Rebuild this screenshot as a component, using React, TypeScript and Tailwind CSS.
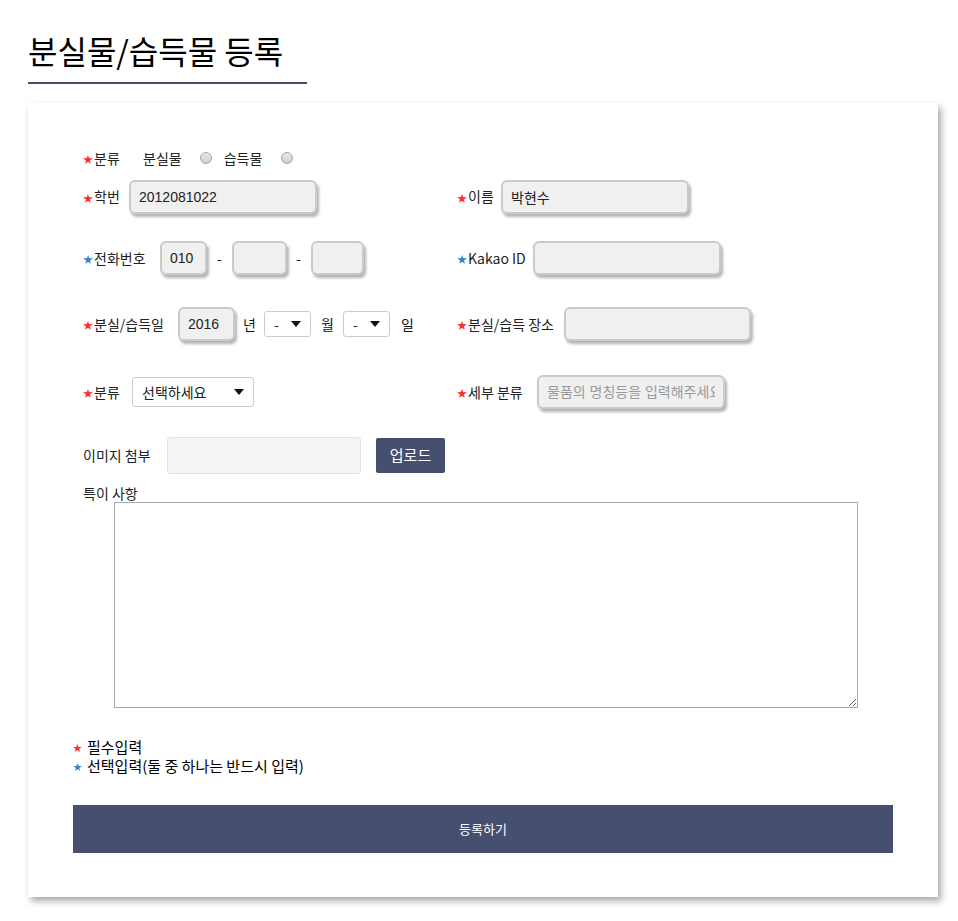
import React from "react"

const kr = "font-['Noto_Sans_CJK_KR',sans-serif]"
const inputCls =
  "h-[34px] rounded-[6px] border-2 border-[#cacaca] bg-[#f0f0f0] shadow-[2px_3px_3px_rgba(0,0,0,0.3)] px-[8px] text-[14px] text-[#222] font-['Liberation_Sans','Noto_Sans_CJK_KR',sans-serif] outline-none"

function Star({ blue, small }: { blue?: boolean; small?: boolean }) {
  return (
    <span
      className={`${small ? "text-[9px] mr-[5px]" : "text-[10px] mr-[1px]"} leading-none ${
        blue ? "text-[#3b7fcc]" : "text-[#ff2a2a]"
      } relative top-[1px]`}
    >
      ★
    </span>
  )
}

function Label({ text, w, blue, optional }: { text: string; w: string; blue?: boolean; optional?: boolean }) {
  return (
    <span className={`${w} shrink-0 flex items-center text-[14px] text-[#222] whitespace-nowrap`}>
      {!optional && <Star blue={blue} />}
      {text}
    </span>
  )
}

function Radio() {
  return (
    <span className="block w-[12px] h-[12px] rounded-full border border-[#a5a5a5] bg-gradient-to-b from-[#e8e8e8] to-[#cfcfcf]" />
  )
}

function Select({ value, w }: { value: string; w: string }) {
  return (
    <div
      className={`${w} flex items-center justify-between rounded-[3px] border border-[#cccccc] bg-white pl-[9px] pr-[9px] text-[14px] text-[#222]`}
    >
      <span>{value}</span>
      <svg width="10" height="6" viewBox="0 0 10 6">
        <path d="M0 0h10L5 6z" fill="#111" />
      </svg>
    </div>
  )
}

export default function App() {
  return (
    <div className={`${kr} bg-white min-h-[921px] w-[958px] text-[#111]`}>
      <div className="pl-[28px] pt-[26px]">
        <h1 className="w-[279px] border-b-2 border-[#474f70] pb-[8px] text-[32px] leading-[48px] font-normal text-black">
          분실물/습득물 등록
        </h1>
      </div>

      <div className="ml-[28px] mt-[19px] w-[910px] bg-white shadow-[3px_4px_7px_rgba(0,0,0,0.35)] pl-[45px] pr-[45px] pt-[45px] pb-[44px]">
        <div className="pl-[10px]">
          {/* row 1 */}
          <div className="flex h-[20px] items-center">
            <Label text="분류" w="w-[60px]" />
            <span className="text-[14px] text-[#222]">분실물</span>
            <span className="ml-[18px]"><Radio /></span>
            <span className="ml-[12px] text-[14px] text-[#222]">습득물</span>
            <span className="ml-[19px]"><Radio /></span>
          </div>

          {/* row 2 */}
          <div className="mt-[11px] flex h-[35px] items-center">
            <div className="flex w-[374px] items-center">
              <Label text="학번" w="w-[46px]" />
              <input className={`${inputCls} w-[188px]`} defaultValue="2012081022" />
            </div>
            <div className="flex items-center">
              <Label text="이름" w="w-[44px]" />
              <input className={`${inputCls} w-[188px]`} defaultValue="박현수" />
            </div>
          </div>

          {/* row 3 */}
          <div className="mt-[27px] flex h-[34px] items-center">
            <div className="flex w-[374px] items-center">
              <Label text="전화번호" w="w-[77px]" blue />
              <input className={`${inputCls} w-[47px]`} defaultValue="010" />
              <span className="w-[25px] pl-[10px] text-[14px]">-</span>
              <input className={`${inputCls} w-[55px]`} />
              <span className="w-[24px] pl-[9px] text-[14px]">-</span>
              <input className={`${inputCls} w-[53px]`} />
            </div>
            <div className="flex items-center">
              <Label text="Kakao ID" w="w-[76px]" blue />
              <input className={`${inputCls} w-[188px]`} />
            </div>
          </div>

          {/* row 4 */}
          <div className="mt-[32px] flex h-[34px] items-center">
            <div className="flex w-[374px] items-center">
              <Label text="분실/습득일" w="w-[95px]" />
              <input className={`${inputCls} w-[57px]`} defaultValue="2016" />
              <span className="w-[29px] pl-[8px] text-[14px]">년</span>
              <Select value="-" w="w-[47px] h-[26px]" />
              <span className="w-[32px] pl-[10px] text-[14px]">월</span>
              <Select value="-" w="w-[47px] h-[26px]" />
              <span className="pl-[11px] text-[14px]">일</span>
            </div>
            <div className="flex items-center">
              <Label text="분실/습득 장소" w="w-[107px]" />
              <input className={`${inputCls} w-[187px]`} />
            </div>
          </div>

          {/* row 5 */}
          <div className="mt-[34px] flex h-[34px] items-center">
            <div className="flex w-[374px] items-center">
              <Label text="분류" w="w-[49px]" />
              <Select value="선택하세요" w="w-[122px] h-[30px]" />
            </div>
            <div className="flex items-center">
              <Label text="세부 분류" w="w-[80px]" />
              <input
                className={`${inputCls} w-[188px] placeholder:text-[#9a9a9a]`}
                placeholder="물품의 명칭등을 입력해주세요"
              />
            </div>
          </div>

          {/* row 6 */}
          <div className="mt-[28px] flex h-[37px] items-center">
            <Label text="이미지 첨부" w="w-[84px]" optional />
            <div className="h-[37px] w-[194px] rounded-[3px] border border-[#e3e3e3] bg-[#f4f4f4]" />
            <button className="ml-[15px] h-[35px] w-[69px] rounded-[2px] bg-[#474f70] text-[15px] text-white">
              업로드
            </button>
          </div>

          <div className="mt-[11px] h-[17px] text-[14px] leading-[17px] text-[#222]">특이 사항</div>
          <textarea className="ml-[31px] block h-[206px] w-[744px] border border-[#a9a9a9] outline-none" />
        </div>

        {/* legend */}
        <div className="mt-[29px] text-[15px] leading-[19px] text-black">
          <div className="flex h-[19px] items-center">
            <Star small />
            필수입력
          </div>
          <div className="flex h-[19px] items-center">
            <Star small blue />
            선택입력(둘 중 하나는 반드시 입력)
          </div>
        </div>

        <button className="mt-[30px] block h-[48px] w-[820px] bg-[#474f70] text-[13px] text-white">
          등록하기
        </button>
      </div>
    </div>
  )
}
